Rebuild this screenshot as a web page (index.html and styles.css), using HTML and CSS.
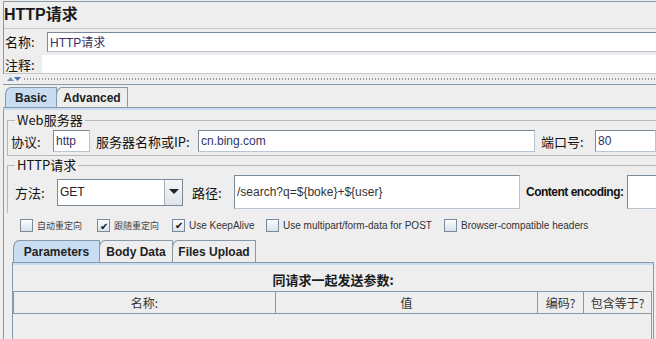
FILE: index.html
```html
<!DOCTYPE html>
<html>
<head>
<meta charset="utf-8">
<link rel="stylesheet" href="styles.css">
</head>
<body>
<div class="page">
  <div class="head">
    <div class="title">HTTP请求</div>
    <div class="row name-row">
      <span class="lbl lbl-name">名称:</span>
      <div class="field name-field">HTTP请求</div>
    </div>
    <div class="row comment-row">
      <span class="lbl lbl-comment">注释:</span>
      <div class="comment-field"></div>
    </div>
  </div>
  <div class="divider">
    <svg class="arrows" width="14" height="6" viewBox="0 0 14 6">
      <polygon points="0,5 3.5,1 7,5" fill="#6d8fc2"/>
      <polygon points="7,1 14,1 10.5,5" fill="#4a6ea8"/>
    </svg>
    <div class="dots"></div>
  </div>
  <div class="tabbar">
    <div class="tab sel tab-basic">Basic</div>
    <div class="tab tab-adv">Advanced</div>
  </div>
  <div class="panel">
    <fieldset class="group web">
      <legend>Web服务器</legend>
      <div class="frow">
        <span class="lbl l-proto">协议:</span>
        <div class="field f-proto">http</div>
        <span class="lbl l-server">服务器名称或IP:</span>
        <div class="field f-server">cn.bing.com</div>
        <span class="lbl l-port">端口号:</span>
        <div class="field f-port">80</div>
      </div>
    </fieldset>
    <fieldset class="group http">
      <legend>HTTP请求</legend>
      <div class="frow hrow">
        <span class="lbl l-method">方法:</span>
        <div class="select">
          <span class="sel-text">GET</span>
          <span class="sel-btn"><svg width="10" height="6" viewBox="0 0 10 6"><polygon points="0,0 10,0 5,5" fill="#222"/></svg></span>
        </div>
        <span class="lbl l-path">路径:</span>
        <div class="field f-path">/search?q=${boke}+${user}</div>
        <span class="lbl l-enc">Content encoding:</span>
        <div class="field f-enc"></div>
      </div>
    </fieldset>
    <div class="checks">
      <label class="chk c1"><span class="box"></span>自动重定向</label>
      <label class="chk c2"><span class="box on">✔</span>跟随重定向</label>
      <label class="chk c3"><span class="box on">✔</span>Use KeepAlive</label>
      <label class="chk c4"><span class="box"></span>Use multipart/form-data for POST</label>
      <label class="chk c5"><span class="box"></span>Browser-compatible headers</label>
    </div>
    <div class="subtabs">
      <div class="stab sel st-params">Parameters</div>
      <div class="stab st-body">Body Data</div>
      <div class="stab st-files">Files Upload</div>
    </div>
    <div class="subpanel">
      <div class="caption">同请求一起发送参数:</div>
      <div class="table">
        <div class="thead">
          <div class="th c-name">名称:</div>
          <div class="th c-val">值</div>
          <div class="th c-enc">编码?</div>
          <div class="th c-eq">包含等于?</div>
        </div>
        <div class="tbody"></div>
      </div>
    </div>
  </div>
</div>
</body>
</html>
```

FILE: styles.css
```css
* { box-sizing: border-box; }
html, body { margin: 0; padding: 0; }
body {
  width: 656px;
  height: 339px;
  overflow: hidden;
  background: #eeeeee;
  font-family: "Liberation Sans", "Noto Sans CJK SC", sans-serif;
  color: #222;
}
.page { padding-left: 3px; }

.head {
  margin-top: 1px;
  border-top: 1px solid #8a99a6;
  border-left: 1px solid #8a99a6;
}
.title {
  height: 27px;
  line-height: 25px;
  font-size: 16px;
  font-weight: bold;
  padding-left: 0;
  color: #1a1a1a;
  border-bottom: 1px solid #c6c6c6;
}
.row { display: flex; align-items: center; }
.lbl {
  font-family: "Noto Sans CJK SC", "Liberation Sans", sans-serif;
  font-size: 13px;
  color: #111;
  white-space: nowrap;
  flex-shrink: 0;
}
.name-row { height: 23px; padding-top: 2px; }
.lbl-name { width: 43px; padding-left: 1px; }
.field {
  background: #fff;
  border: 1px solid #7a8a99;
  border-right-color: #b8c4cf;
  border-bottom-color: #b8c4cf;
  font-size: 12px;
  color: #333366;
  padding-left: 2px;
  display: flex;
  align-items: center;
  white-space: nowrap;
  overflow: hidden;
  flex-shrink: 0;
}
.name-field { flex: 1; height: 20px; border-right: none; }
.comment-row { height: 19px; margin-top: 3px; border-bottom: 1px solid #c6c6c6; align-items: stretch; }
.lbl-comment { width: 38px; padding-left: 1px; display: flex; align-items: center; }
.comment-field { flex: 1; background: #fff; }

.divider {
  height: 11px;
  display: flex;
  align-items: center;
  padding-left: 4px;
  border-bottom: 1px solid #8a99a6;
}
.arrows { display: block; }
.dots {
  flex: 1;
  height: 2px;
  margin-left: 2px;
  background-image: radial-gradient(circle, #9a9a9a 0.6px, transparent 0.8px);
  background-size: 3px 2px;
}

.tabbar {
  display: flex;
  align-items: flex-end;
  height: 23px;
  padding-left: 2px;
  border-bottom: 1px solid #8a99a6;
}
.tab {
  height: 20px;
  font-size: 12px;
  font-weight: bold;
  color: #222;
  border: 1px solid #8a99a6;
  border-bottom: none;
  border-top-left-radius: 6px 8px;
  display: flex;
  align-items: center;
  justify-content: center;
  background: #eeeeee;
}
.tab.sel { background: #c8ddf2; }
.tab-basic { width: 52px; }
.tab-adv { width: 72px; margin-left: -1px; }

.panel {
  border-left: 1px solid #8a99a6;
  border-top: 2px solid #c8ddf2;
  padding-left: 3px;
  padding-top: 2px;
}
.group {
  margin: 0;
  padding: 0 0 4px 3px;
  border: 1px solid #b8b8b8;
  border-right: none;
  min-width: 0;
}
.group legend {
  font-family: "Noto Sans CJK SC", "Liberation Sans", sans-serif;
  font-size: 13px;
  color: #111;
  padding: 0 2px;
  margin-left: 4px;
  line-height: 16px;
}
.web { height: 44px; }
.frow { display: flex; align-items: center; }
.web .frow { margin-top: 2px; height: 22px; }
.l-proto { width: 42px; }
.f-proto { width: 37px; height: 22px; }
.l-server { margin-left: 6px; width: 102px; }
.f-server { width: 337px; height: 22px; }
.l-port { margin-left: 6px; width: 54px; }
.f-port { width: 61px; height: 22px; }

.http { margin-top: 1px; height: 56px; border-bottom: none; }
.hrow { margin-top: 2px; height: 34px; }
.l-method { margin-left: 4px; width: 42px; }
.select {
  width: 126px;
  height: 27px;
  background: #fff;
  border: 1px solid #7a8a99;
  display: flex;
  align-items: stretch;
  flex-shrink: 0;
}
.sel-text { flex: 1; font-size: 12px; color: #222; display: flex; align-items: center; padding-left: 2px; }
.sel-btn {
  width: 18px;
  background: linear-gradient(#f4f6f8, #dfe4e9);
  border-left: 1px solid #a4b0bc;
  display: flex;
  align-items: center;
  justify-content: center;
}
.l-path { margin-left: 9px; width: 42px; }
.f-path { width: 286px; height: 34px; color: #333; }
.l-enc {
  margin-left: 6px;
  margin-right: 4px;
  font-family: "Liberation Sans", sans-serif;
  font-size: 12px;
  font-weight: bold;
  letter-spacing: -0.5px;
}
.f-enc { width: 30px; height: 34px; }

.checks {
  display: flex;
  align-items: center;
  height: 17px;
  margin-top: 4px;
  padding-left: 13px;
}
.chk {
  display: flex;
  align-items: center;
  font-size: 10px;
  color: #333;
  white-space: nowrap;
}
.c1, .c2 { font-family: "Noto Sans CJK SC", sans-serif; font-size: 9px; color: #444; }
.box {
  width: 13px;
  height: 13px;
  border: 1px solid #7a8a99;
  background: linear-gradient(#fbfcfd, #d8e2ec);
  margin-right: 4px;
  font-size: 10px;
  line-height: 11px;
  text-align: center;
  color: #111;
}
.c1 { width: 77px; }
.c2 { width: 75px; }
.c3 { width: 94px; }
.c4 { width: 178px; }

.subtabs {
  display: flex;
  align-items: flex-end;
  height: 23px;
  margin-top: 5px;
  padding-left: 6px;
}
.stab {
  height: 22px;
  font-size: 12px;
  font-weight: bold;
  color: #222;
  border: 1px solid #8a99a6;
  border-bottom: none;
  border-top-left-radius: 6px 8px;
  display: flex;
  align-items: center;
  justify-content: center;
}
.stab.sel { background: #c8ddf2; }
.st-params { width: 87px; }
.st-body { width: 74px; margin-left: -1px; }
.st-files { width: 84px; margin-left: -1px; }

.subpanel {
  margin-left: 5px;
  width: 642px;
  height: 80px;
  border: 1px solid #8a99a6;
  border-bottom: none;
  box-shadow: inset 0 2px 0 #c8ddf2;
}
.caption {
  text-align: center;
  font-family: "Noto Sans CJK SC", sans-serif;
  font-size: 13px;
  font-weight: bold;
  color: #1a1a1a;
  padding-top: 7px;
  height: 28px;
}
.table { margin-left: 0; width: 639px; }
.thead {
  display: flex;
  height: 23px;
  border: 1px solid #8a99a6;
}
.th {
  font-family: "Noto Sans CJK SC", sans-serif;
  font-size: 12px;
  color: #333;
  display: flex;
  align-items: center;
  justify-content: center;
  border-right: 1px solid #8a99a6;
}
.th:last-child { border-right: none; }
.c-name { width: 262px; }
.c-val { width: 262px; }
.c-enc { width: 46px; }
.c-eq { flex: 1; }
.tbody { height: 30px; border-right: 1px solid #8a99a6; }
```
